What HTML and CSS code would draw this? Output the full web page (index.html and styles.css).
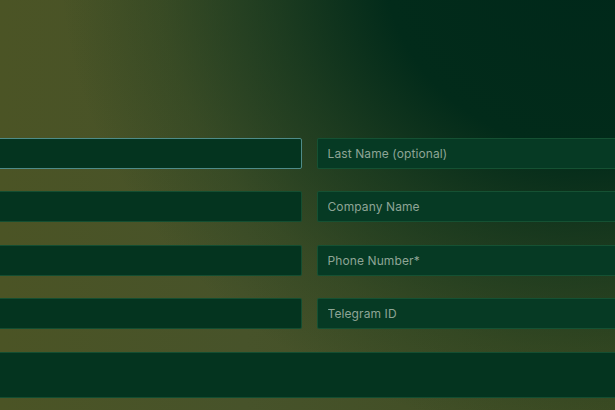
FILE: index.html
```html
<!DOCTYPE html>
<html lang="en">
<head>
<meta charset="utf-8">
<title>Contact form</title>
<link rel="stylesheet" href="styles.css">
</head>
<body>
<main class="page">
  <form class="form">
    <input class="field field-focus" type="text" aria-label="First Name">
    <input class="field field-right" type="text" placeholder="Last Name (optional)">
    <input class="field" type="email" aria-label="Email">
    <input class="field field-right" type="text" placeholder="Company Name">
    <input class="field" type="text" aria-label="Country">
    <input class="field field-right" type="tel" placeholder="Phone Number*">
    <input class="field" type="text" aria-label="Website">
    <input class="field field-right" type="text" placeholder="Telegram ID">
    <textarea class="field field-wide" aria-label="Message"></textarea>
  </form>
</main>
</body>
</html>
```
FILE: styles.css
```css
html, body {
  margin: 0;
  padding: 0;
  width: 615px;
  height: 410px;
  overflow: hidden;
}
body {
  font-family: Inter, "Open Sans", "Liberation Sans", sans-serif;
  background:
    radial-gradient(ellipse 540px 480px at 600px -40px, #00281a 0%, #022b1a 40%, rgba(12, 50, 28, 0.72) 60%, rgba(20, 55, 28, 0.3) 82%, rgba(20, 55, 28, 0) 100%),
    linear-gradient(to right, #4b5425 0%, #47532a 40%, #3e4c23 100%);
}
.page {
  padding-top: 137.5px;
}
.form {
  margin-left: -30px;
  width: 678px;
  display: grid;
  grid-template-columns: 1fr 1fr;
  column-gap: 15px;
  row-gap: 22.5px;
}
.field {
  box-sizing: border-box;
  height: 31px;
  margin: 0;
  padding: 0 10px;
  border: 1px solid rgba(40, 110, 70, 0.45);
  border-radius: 2px;
  background: #04341f;
  color: #8ea596;
  font-family: inherit;
  font-size: 12px;
  letter-spacing: 0.1px;
  outline: none;
  width: 100%;
}
.field::placeholder {
  color: #8ea596;
  opacity: 1;
}
.field-right {
  background: #063a24;
}
.field-focus {
  border-color: #4e8c88;
}
.field-wide {
  grid-column: 1 / span 2;
  height: 46px;
  resize: none;
}
```
